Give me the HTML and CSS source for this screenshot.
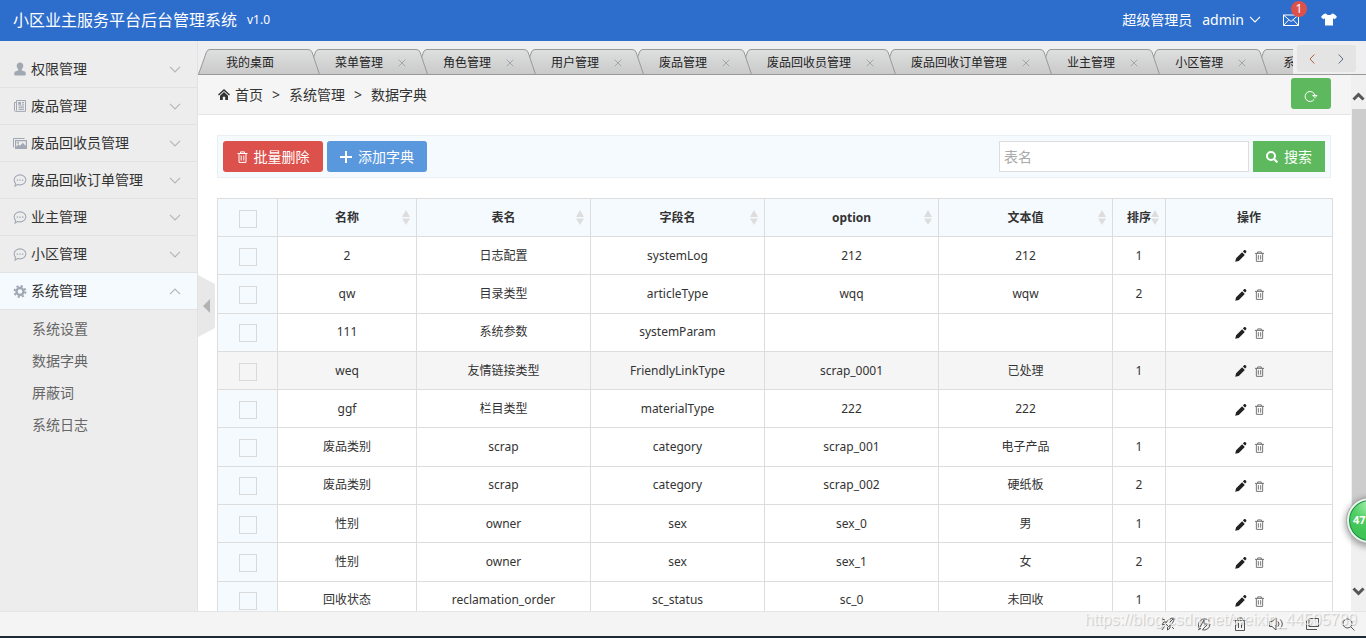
FILE: index.html
```html
<!DOCTYPE html>
<html lang="zh-CN">
<head>
<meta charset="utf-8">
<title>小区业主服务平台后台管理系统</title>
<link rel="stylesheet" href="styles.css">
</head>
<body>
<svg class="defs" aria-hidden="true">
  <defs>
    <linearGradient id="tabfill" x1="0" y1="0" x2="0" y2="1"><stop offset="0" stop-color="#dedfdf"/><stop offset="1" stop-color="#c9c9ca"/></linearGradient>
  </defs>
  <symbol id="cap-l" viewBox="0 0 12 26"><path d="M0 26L8.500 3Q9.500 .5 12 .5V26z" fill="url(#tabfill)"/><path d="M.3 26L8.500 3Q9.500 .5 12 .5" fill="none" stroke="#999"/></symbol>
  <symbol id="cap-r" viewBox="0 0 12 26"><path d="M0 .5Q3 .5 4 3L12 26H0z" fill="url(#tabfill)"/><path d="M0 .5Q3 .5 4 3L11.700 26" fill="none" stroke="#999"/></symbol>
  <symbol id="down" viewBox="0 0 12 7"><path d="M1 .8l5 5 5-5" fill="none" stroke="currentColor" stroke-width="1.200"/></symbol>
  <symbol id="x" viewBox="0 0 8 8"><path d="M.7.7l6.600 6.600M7.300.7L.7 7.300" fill="none" stroke="currentColor"/></symbol>
  <symbol id="user" viewBox="0 0 12 14"><path d="M6 .5c2 0 3.300 1.400 3.300 3.300 0 1.500-.8 2.700-1.500 3.500v1.200l3 1.100c.7.300.9 1 .9 1.900v1.300c0 .4-.2.700-.7.700H1c-.5 0-.7-.3-.7-.7v-1.300c0-.9.200-1.600.9-1.900l3-1.100V7.300C3.500 6.500 2.700 5.300 2.700 3.800 2.700 1.900 4 .5 6 .5z" fill="currentColor"/></symbol>
  <symbol id="news" viewBox="0 0 12 12"><path d="M2.500.5h9v10.900h-10a1 1 0 0 1-1-1V2.500h2zM2.500 2.500v8M4.500 6h5.500M4.500 7.700h5.500M4.500 9.400h5.500M8 2.500h2M8 4.200h2" fill="none" stroke="currentColor"/><path d="M4.200 2h2.800v2.800H4.200z" fill="currentColor"/></symbol>
  <symbol id="pics" viewBox="0 0 14 11"><path d="M.5 9.500v-9h11" fill="none" stroke="currentColor"/><path d="M2 2h12v9H2zm1.200 1.200v5.500l2.300-2.500 1.500 1.500 2.800-3 3 3.300V3.200zM5 3.800a1 1 0 1 1 0 2 1 1 0 0 1 0-2z" fill="currentColor" fill-rule="evenodd"/></symbol>
  <symbol id="chat" viewBox="0 0 12 12"><path d="M6 .8c3 0 5.400 2 5.400 4.600S9 10 6 10c-.8 0-1.500-.1-2.200-.4l-2.300 1.600.3-2.700C1 7.700.6 6.600.6 5.400.6 2.800 3 .8 6 .8z" fill="none" stroke="currentColor"/><path d="M3 5h1.300v1.200H3zM5.400 5h1.300v1.200H5.400zM7.800 5h1.300v1.200H7.800z" fill="currentColor"/></symbol>
  <symbol id="gear" viewBox="0 0 12 12"><circle cx="6" cy="6" r="3.200" fill="none" stroke="currentColor" stroke-width="2.200"/><circle cx="6" cy="6" r="5" fill="none" stroke="currentColor" stroke-width="1.900" stroke-dasharray="2 1.927"/></symbol>
  <symbol id="home" viewBox="0 0 12 11"><path d="M6 0l6 5.600-.9 1L6 2 .9 6.600 0 5.600zM6 3.100l4 3.700V11H7.200V7.700H4.800V11H2V6.800z" fill="currentColor"/></symbol>
  <symbol id="trash" viewBox="0 0 10 12"><path d="M0 2.500h10M3 2.500V.9h4v1.600M1.500 2.500v8.900h7V2.500M3.700 4.500v5M6.300 4.500v5" fill="none" stroke="currentColor"/></symbol>
  <symbol id="plus" viewBox="0 0 12 12"><path d="M6 0v12M0 6h12" stroke="currentColor" stroke-width="2"/></symbol>
  <symbol id="find" viewBox="0 0 12 12"><circle cx="5" cy="5" r="4" fill="none" stroke="currentColor" stroke-width="2"/><path d="M8 8l3.400 3.400" stroke="currentColor" stroke-width="2.200"/></symbol>
  <symbol id="pen" viewBox="0 0 12 12"><path d="M.2 11.800l.9-3.600 6-6 2.700 2.700-6 6zM7.900 1.500l.9-.9c.8-.8 1.600-.6 2.100 0s.8 1.300 0 2.100l-.9.900z" fill="currentColor"/></symbol>
  <symbol id="sort" viewBox="0 0 8 15"><path d="M4 0l4 7H0zM0 8.500h8L4 15z" fill="currentColor"/></symbol>
</svg>

<header class="top">
  <h1 class="brand">小区业主服务平台后台管理系统</h1>
  <span class="ver">v1.0</span>
  <nav class="account">
    <span>超级管理员</span>
    <a href="#" class="admin">admin <svg width="12" height="7"><use href="#down"/></svg></a>
    <a href="#" class="mail" aria-label="消息"><svg width="16" height="12" viewBox="0 0 16 12" fill="none" stroke="currentColor"><path d="M.5 1h15v10.500H.5zM.5 1L8 7.500 15.500 1M.5 11.500l5.300-5.700M15.500 11.500l-5.300-5.700"/></svg><span class="badge">1</span></a>
    <a href="#" aria-label="换肤"><svg width="16" height="13" viewBox="0 0 16 13"><path d="M5 .5c1 2 5 2 6 0 2 .2 3.500 1 5 3.500l-2.300 2.200-1.700-1V12.500H4V5.200l-1.700 1L0 4C1.500 1.500 3 .7 5 .5z" fill="currentColor"/></svg></a>
  </nav>
</header>

<div class="middle">
  <aside class="side">
    <ul class="menu">
      <li><a href="#"><svg width="14" height="14"><use href="#user"/></svg>权限管理<svg class="arr" width="12" height="7"><use href="#down"/></svg></a></li>
      <li><a href="#"><svg width="14" height="12"><use href="#news"/></svg>废品管理<svg class="arr" width="12" height="7"><use href="#down"/></svg></a></li>
      <li><a href="#"><svg width="14" height="11"><use href="#pics"/></svg>废品回收员管理<svg class="arr" width="12" height="7"><use href="#down"/></svg></a></li>
      <li><a href="#"><svg width="14" height="13"><use href="#chat"/></svg>废品回收订单管理<svg class="arr" width="12" height="7"><use href="#down"/></svg></a></li>
      <li><a href="#"><svg width="14" height="13"><use href="#chat"/></svg>业主管理<svg class="arr" width="12" height="7"><use href="#down"/></svg></a></li>
      <li><a href="#"><svg width="14" height="13"><use href="#chat"/></svg>小区管理<svg class="arr" width="12" height="7"><use href="#down"/></svg></a></li>
      <li><a href="#" class="open"><svg width="14" height="13"><use href="#gear"/></svg>系统管理<svg class="arr" width="12" height="7"><use href="#down"/></svg></a>
        <ul class="sub">
          <li><a href="#">系统设置</a></li>
          <li><a href="#">数据字典</a></li>
          <li><a href="#">屏蔽词</a></li>
          <li><a href="#">系统日志</a></li>
        </ul>
      </li>
    </ul>
  </aside>

  <main class="main">
    <button class="fold" aria-label="收起"><svg width="17" height="62" viewBox="0 0 17 62"><path d="M0 0l17 9v44L0 62z" fill="#e8e8e8"/><path d="M12 24v14l-7-7z" fill="#b3b3b3"/></svg></button>
    <div class="tabbar">
      <ul class="tabs">
        <li class="tab"><svg width="12" height="26"><use href="#cap-l"/></svg><span class="mid"><a href="#">我的桌面</a></span><svg width="12" height="26"><use href="#cap-r"/></svg></li>
        <li class="tab"><svg width="12" height="26"><use href="#cap-l"/></svg><span class="mid"><a href="#">菜单管理</a><button class="close" aria-label="关闭"><svg width="8" height="8"><use href="#x"/></svg></button></span><svg width="12" height="26"><use href="#cap-r"/></svg></li>
        <li class="tab"><svg width="12" height="26"><use href="#cap-l"/></svg><span class="mid"><a href="#">角色管理</a><button class="close" aria-label="关闭"><svg width="8" height="8"><use href="#x"/></svg></button></span><svg width="12" height="26"><use href="#cap-r"/></svg></li>
        <li class="tab"><svg width="12" height="26"><use href="#cap-l"/></svg><span class="mid"><a href="#">用户管理</a><button class="close" aria-label="关闭"><svg width="8" height="8"><use href="#x"/></svg></button></span><svg width="12" height="26"><use href="#cap-r"/></svg></li>
        <li class="tab"><svg width="12" height="26"><use href="#cap-l"/></svg><span class="mid"><a href="#">废品管理</a><button class="close" aria-label="关闭"><svg width="8" height="8"><use href="#x"/></svg></button></span><svg width="12" height="26"><use href="#cap-r"/></svg></li>
        <li class="tab"><svg width="12" height="26"><use href="#cap-l"/></svg><span class="mid"><a href="#">废品回收员管理</a><button class="close" aria-label="关闭"><svg width="8" height="8"><use href="#x"/></svg></button></span><svg width="12" height="26"><use href="#cap-r"/></svg></li>
        <li class="tab"><svg width="12" height="26"><use href="#cap-l"/></svg><span class="mid"><a href="#">废品回收订单管理</a><button class="close" aria-label="关闭"><svg width="8" height="8"><use href="#x"/></svg></button></span><svg width="12" height="26"><use href="#cap-r"/></svg></li>
        <li class="tab"><svg width="12" height="26"><use href="#cap-l"/></svg><span class="mid"><a href="#">业主管理</a><button class="close" aria-label="关闭"><svg width="8" height="8"><use href="#x"/></svg></button></span><svg width="12" height="26"><use href="#cap-r"/></svg></li>
        <li class="tab"><svg width="12" height="26"><use href="#cap-l"/></svg><span class="mid"><a href="#">小区管理</a><button class="close" aria-label="关闭"><svg width="8" height="8"><use href="#x"/></svg></button></span><svg width="12" height="26"><use href="#cap-r"/></svg></li>
        <li class="tab"><svg width="12" height="26"><use href="#cap-l"/></svg><span class="mid"><a href="#">系</a></span></li>
      </ul>
      <div class="pager">
        <button aria-label="向左"><svg width="6" height="10" viewBox="0 0 6 10"><path d="M5.300.5L1 5l4.300 4.500" fill="none" stroke="#a5623c"/></svg></button>
        <button aria-label="向右"><svg width="6" height="10" viewBox="0 0 6 10"><path d="M.7.5L5 5 .7 9.500" fill="none" stroke="#5a6f8c"/></svg></button>
      </div>
    </div>

    <div class="frame">
      <div class="page">
        <nav class="crumbs">
          <svg width="12" height="11"><use href="#home"/></svg>
          <a href="#">首页</a><span class="gt">&gt;</span><span>系统管理</span><span class="gt">&gt;</span><span>数据字典</span>
          <button class="refresh" aria-label="刷新"><svg width="14" height="12" viewBox="0 0 14 12"><path d="M10.300 9.200A5 5 0 1 1 11 5.500M8.600 5.400H13L11.200 7.600z" fill="none" stroke="currentColor"/></svg></button>
        </nav>
        <div class="content">
          <form class="tools">
            <button type="button" class="btn red"><svg width="11" height="12"><use href="#trash"/></svg>批量删除</button>
            <button type="button" class="btn blue"><svg width="12" height="12"><use href="#plus"/></svg>添加字典</button>
            <input class="query" type="text" placeholder="表名" aria-label="表名">
            <button type="button" class="btn green"><svg width="12" height="12"><use href="#find"/></svg>搜索</button>
          </form>
          <table class="grid">
            <colgroup><col class="c-check"><col class="c-name"><col class="c-wide"><col class="c-wide"><col class="c-wide"><col class="c-wide"><col class="c-order"><col class="c-ops"></colgroup>
            <thead>
              <tr><th><input type="checkbox" aria-label="全选"></th><th>名称<svg class="sort"><use href="#sort"/></svg></th><th>表名<svg class="sort"><use href="#sort"/></svg></th><th>字段名<svg class="sort"><use href="#sort"/></svg></th><th>option<svg class="sort"><use href="#sort"/></svg></th><th>文本值<svg class="sort"><use href="#sort"/></svg></th><th>排序<svg class="sort"><use href="#sort"/></svg></th><th>操作</th></tr>
            </thead>
            <tbody>
              <tr><td><input type="checkbox" aria-label="选择"></td><td>2</td><td>日志配置</td><td>systemLog</td><td>212</td><td>212</td><td>1</td><td><a href="#" class="op" aria-label="编辑"><svg class="pen"><use href="#pen"/></svg></a><a href="#" class="op" aria-label="删除"><svg class="bin"><use href="#trash"/></svg></a></td></tr>
              <tr><td><input type="checkbox" aria-label="选择"></td><td>qw</td><td>目录类型</td><td>articleType</td><td>wqq</td><td>wqw</td><td>2</td><td><a href="#" class="op" aria-label="编辑"><svg class="pen"><use href="#pen"/></svg></a><a href="#" class="op" aria-label="删除"><svg class="bin"><use href="#trash"/></svg></a></td></tr>
              <tr><td><input type="checkbox" aria-label="选择"></td><td>111</td><td>系统参数</td><td>systemParam</td><td></td><td></td><td></td><td><a href="#" class="op" aria-label="编辑"><svg class="pen"><use href="#pen"/></svg></a><a href="#" class="op" aria-label="删除"><svg class="bin"><use href="#trash"/></svg></a></td></tr>
              <tr class="hot"><td><input type="checkbox" aria-label="选择"></td><td>weq</td><td>友情链接类型</td><td>FriendlyLinkType</td><td>scrap_0001</td><td>已处理</td><td>1</td><td><a href="#" class="op" aria-label="编辑"><svg class="pen"><use href="#pen"/></svg></a><a href="#" class="op" aria-label="删除"><svg class="bin"><use href="#trash"/></svg></a></td></tr>
              <tr><td><input type="checkbox" aria-label="选择"></td><td>ggf</td><td>栏目类型</td><td>materialType</td><td>222</td><td>222</td><td></td><td><a href="#" class="op" aria-label="编辑"><svg class="pen"><use href="#pen"/></svg></a><a href="#" class="op" aria-label="删除"><svg class="bin"><use href="#trash"/></svg></a></td></tr>
              <tr><td><input type="checkbox" aria-label="选择"></td><td>废品类别</td><td>scrap</td><td>category</td><td>scrap_001</td><td>电子产品</td><td>1</td><td><a href="#" class="op" aria-label="编辑"><svg class="pen"><use href="#pen"/></svg></a><a href="#" class="op" aria-label="删除"><svg class="bin"><use href="#trash"/></svg></a></td></tr>
              <tr><td><input type="checkbox" aria-label="选择"></td><td>废品类别</td><td>scrap</td><td>category</td><td>scrap_002</td><td>硬纸板</td><td>2</td><td><a href="#" class="op" aria-label="编辑"><svg class="pen"><use href="#pen"/></svg></a><a href="#" class="op" aria-label="删除"><svg class="bin"><use href="#trash"/></svg></a></td></tr>
              <tr><td><input type="checkbox" aria-label="选择"></td><td>性别</td><td>owner</td><td>sex</td><td>sex_0</td><td>男</td><td>1</td><td><a href="#" class="op" aria-label="编辑"><svg class="pen"><use href="#pen"/></svg></a><a href="#" class="op" aria-label="删除"><svg class="bin"><use href="#trash"/></svg></a></td></tr>
              <tr><td><input type="checkbox" aria-label="选择"></td><td>性别</td><td>owner</td><td>sex</td><td>sex_1</td><td>女</td><td>2</td><td><a href="#" class="op" aria-label="编辑"><svg class="pen"><use href="#pen"/></svg></a><a href="#" class="op" aria-label="删除"><svg class="bin"><use href="#trash"/></svg></a></td></tr>
              <tr><td><input type="checkbox" aria-label="选择"></td><td>回收状态</td><td>reclamation_order</td><td>sc_status</td><td>sc_0</td><td>未回收</td><td>1</td><td><a href="#" class="op" aria-label="编辑"><svg class="pen"><use href="#pen"/></svg></a><a href="#" class="op" aria-label="删除"><svg class="bin"><use href="#trash"/></svg></a></td></tr>
            </tbody>
          </table>
        </div>
      </div>
      <div class="scroll">
        <svg width="13" height="9" viewBox="0 0 13 9"><path d="M1.500 7.500l5-5 5 5" fill="none" stroke="#555" stroke-width="3"/></svg>
        <div class="track"><div class="thumb"></div></div>
        <svg width="13" height="9" viewBox="0 0 13 9"><path d="M1.500 1.500l5 5 5-5" fill="none" stroke="#555" stroke-width="3"/></svg>
      </div>
    </div>
  </main>
</div>

<footer class="status">
  <button aria-label="加速"><svg viewBox="0 0 14 14"><path d="M13 1C9 1 6.500 3 4.500 6.500l3 3C11 7.500 13 5 13 1zM5.500 5H3L1 7.500h3M9 8.500V11l-2.500 2v-3M3.500 9.500L1 13M8 6l4-4M1 2l3 1M11 10l2 2"/></svg></button>
  <button aria-label="引擎"><svg viewBox="0 0 14 14"><path d="M3 12.500A6.200 6.200 0 1 1 12.500 4M13 7a6 6 0 0 1-8 5.700M3 10l4-7v4h4l-5 5M1 13l3-2"/></svg></button>
  <button aria-label="清理"><svg viewBox="0 0 14 14"><path d="M.5 3.500h13M4.500 3V1h5v2M2.500 3.500v10h9v-10M5.500 6v5M8.500 6v5"/></svg></button>
  <button aria-label="静音"><svg viewBox="0 0 14 14"><path d="M.5 4.500h2.500l4-3.500v12L3 9.500H.5zM9 4.500q2 2.500 0 5M11.300 2.500q4 4.500 0 9"/></svg></button>
  <button aria-label="窗口"><svg viewBox="0 0 14 14"><path d="M4 1.500h9.500v8H4zM1.500 4v8.500H12"/></svg></button>
  <button aria-label="缩放"><svg viewBox="0 0 14 14"><circle cx="6.500" cy="6.500" r="4.500"/><path d="M10 10l3.500 3.500"/></svg></button>
</footer>
<div class="ball">47</div>
<div class="mark">https://blog.csdn.net/weixin_44505789</div>
</body>
</html>
```

FILE: styles.css
```css
* { box-sizing: border-box; }
body {
  margin: 0;
  height: 100vh;
  display: flex;
  flex-direction: column;
  overflow: hidden;
  position: relative;
  font: 14px/20px "Noto Sans", "Noto Sans CJK SC", sans-serif;
  color: #333;
  background: #fff;
}
ul { list-style: none; margin: 0; padding: 0; }
a { color: inherit; text-decoration: none; }
button { border: 0; padding: 0; background: none; font: inherit; color: inherit; cursor: pointer; }
svg { display: block; flex: none; }
.defs { position: absolute; width: 0; height: 0; }

.top { flex: none; display: flex; align-items: center; height: 41px; padding: 0 29px 2px 13px; background: #2d6dcc; color: #fff; }
.brand { margin: 0 10px 0 0; font-size: 16px; font-weight: 400; line-height: 20px; }
.ver { font-size: 12px; }
.account { display: flex; align-items: center; margin-left: auto; }
.admin { display: flex; align-items: center; gap: 5px; margin: 0 22px 0 10px; }
.mail { position: relative; margin-right: 22px; }
.badge { position: absolute; left: 8px; top: -13px; width: 16px; height: 16px; border-radius: 8px; background: #dd514c; font-size: 12px; line-height: 16px; text-align: center; }

.middle { flex: 1; min-height: 0; display: flex; }
.side { flex: none; width: 198px; padding-top: 10px; background: #ededed; border-right: 1px solid #e2e2e2; overflow: hidden; }
.menu > li > a { display: flex; align-items: center; gap: 4px; height: 37px; padding: 0 16px 0 13px; border-bottom: 1px solid #e2e2e2; }
.menu > li > a > svg { color: #a2a8b3; }
.menu > li > a > svg.arr { margin-left: auto; color: #b5b5b5; }
.menu > li > a.open { background: #f5faff; }
.menu > li > a.open > svg.arr { transform: rotate(180deg); }
.sub { padding-top: 3px; }
.sub a { display: block; padding: 6px 0 6px 32px; color: #666; }

.main { flex: 1; min-width: 0; display: flex; flex-direction: column; position: relative; }
.fold { position: absolute; left: 0; top: 234px; z-index: 2; }
.tabbar { flex: none; display: flex; height: 34px; padding: 4px 10px 0 0; gap: 4px; background: #efeef0; border-bottom: 1px solid #999; }
.tabs { flex: 1; min-width: 0; display: flex; overflow: hidden; padding-top: 4px; }
.tab { flex: none; display: flex; height: 26px; margin-right: -13px; }
.tab:nth-child(1) { z-index: 10; }
.tab:nth-child(2) { z-index: 9; }
.tab:nth-child(3) { z-index: 8; }
.tab:nth-child(4) { z-index: 7; }
.tab:nth-child(5) { z-index: 6; }
.tab:nth-child(6) { z-index: 5; }
.tab:nth-child(7) { z-index: 4; }
.tab:nth-child(8) { z-index: 3; }
.tab:nth-child(9) { z-index: 2; }
.mid { display: flex; align-items: center; padding: 0 10px 0 16px; border-top: 1px solid #999; background: linear-gradient(#dedfdf, #c9c9ca); font-size: 12px; color: #222; }
.mid a { margin-right: 23px; white-space: nowrap; }
.close { width: 8px; margin-left: -8px; color: #a0a6ae; }
.tab:first-child .mid { padding-right: 11px; }
.pager { flex: none; align-self: flex-start; display: flex; justify-content: space-between; width: 59px; height: 27px; padding: 0 12px; border-radius: 3px; background: #e4e4e4; }

.frame { flex: 1; min-height: 0; display: flex; }
.page { flex: 1; min-width: 0; overflow: hidden; }
.crumbs { display: flex; align-items: center; height: 40px; padding: 0 20px; background: #f5f5f5; border-bottom: 1px solid #e5e5e5; }
.crumbs svg { margin-right: 5px; }
.gt { width: 26px; text-align: center; }
.refresh { display: flex; align-items: center; justify-content: center; width: 40px; height: 31px; margin: 0 0 2px auto; border-radius: 3px; background: #5eb95e; color: #fff; }
.refresh svg { margin: 4px 0 0; }
.content { padding: 20px 20px 20px 19px; }
.tools { display: flex; gap: 4px; padding: 5px; border: 1px solid #e9eff3; background: #f5faff; }
.btn { display: flex; align-items: center; justify-content: center; gap: 6px; width: 100px; height: 31px; border-radius: 3px; color: #fff; }
.red { background: #dd514c; }
.blue { background: #5a98de; }
.green { width: 72px; border-radius: 0; background: #5eb95e; }
.query { width: 250px; height: 31px; margin-left: auto; padding: 0 4px; border: 1px solid #ddd; background: #fff; font: inherit; }
.query::placeholder { color: #aaa; }

.grid { width: 100%; height: 422px; margin-top: 20px; table-layout: fixed; border-collapse: collapse; font-size: 12px; text-align: center; }
.grid th, .grid td { position: relative; height: 38px; padding: 0; border: 1px solid #ddd; vertical-align: middle; }
.grid th, .grid td:first-child { background: #f5faff; }
.grid .hot td { background: #f5f5f5; }
.c-check { width: 60px; }
.c-name { width: 139px; }
.c-wide { width: 174px; }
.c-order { width: 53px; }
.c-ops { width: 167px; }
.grid input { appearance: none; display: block; width: 18px; height: 18px; margin: 2px auto 0; border: 1px solid #d9d9d9; background: transparent; }
.sort { position: absolute; right: 6px; top: 11px; width: 8px; height: 15px; color: #ddd; }
.op { display: inline-block; margin: 0 4px; vertical-align: middle; color: #222; }
.pen { width: 12px; height: 12px; }
.bin { width: 9px; height: 11px; color: #666; }

.scroll { flex: none; display: flex; flex-direction: column; align-items: center; width: 15px; padding: 17px 0 15px; background: #f0f0f0; }
.track { flex: 1; align-self: stretch; padding: 8px 0 8px 1px; }
.thumb { height: 87%; background: #cdcdcd; }

.status { flex: none; display: flex; justify-content: flex-end; gap: 22px; height: 27px; padding: 4px 11px 0 0; background: #f4f4f4; border-top: 1px solid #e5e5e5; border-bottom: 2px solid #1d2a36; }
.status button { height: 16px; }
.status svg { width: 14px; height: 14px; fill: none; stroke: #555; }
.ball { position: absolute; right: -26px; top: 498px; width: 45px; height: 45px; z-index: 3; padding-left: 4px; border: 2px solid #e8f3ea; border-radius: 50%; outline: 1px solid #aaa; background: radial-gradient(circle at 50% 10%, #a8eeb0 0, #4fcf63 40%, #3fc355 70%); box-shadow: inset 0 0 0 1px #178a4a, 0 2px 6px 2px #00000055; font-size: 11px; font-weight: 700; line-height: 39px; color: #fff; }
.mark { position: absolute; right: 9px; bottom: 7px; z-index: 4; font: 16px/22px "Liberation Sans", sans-serif; color: #ffffffb0; text-shadow: 1px 1px 1px #00000030; pointer-events: none; }
```
